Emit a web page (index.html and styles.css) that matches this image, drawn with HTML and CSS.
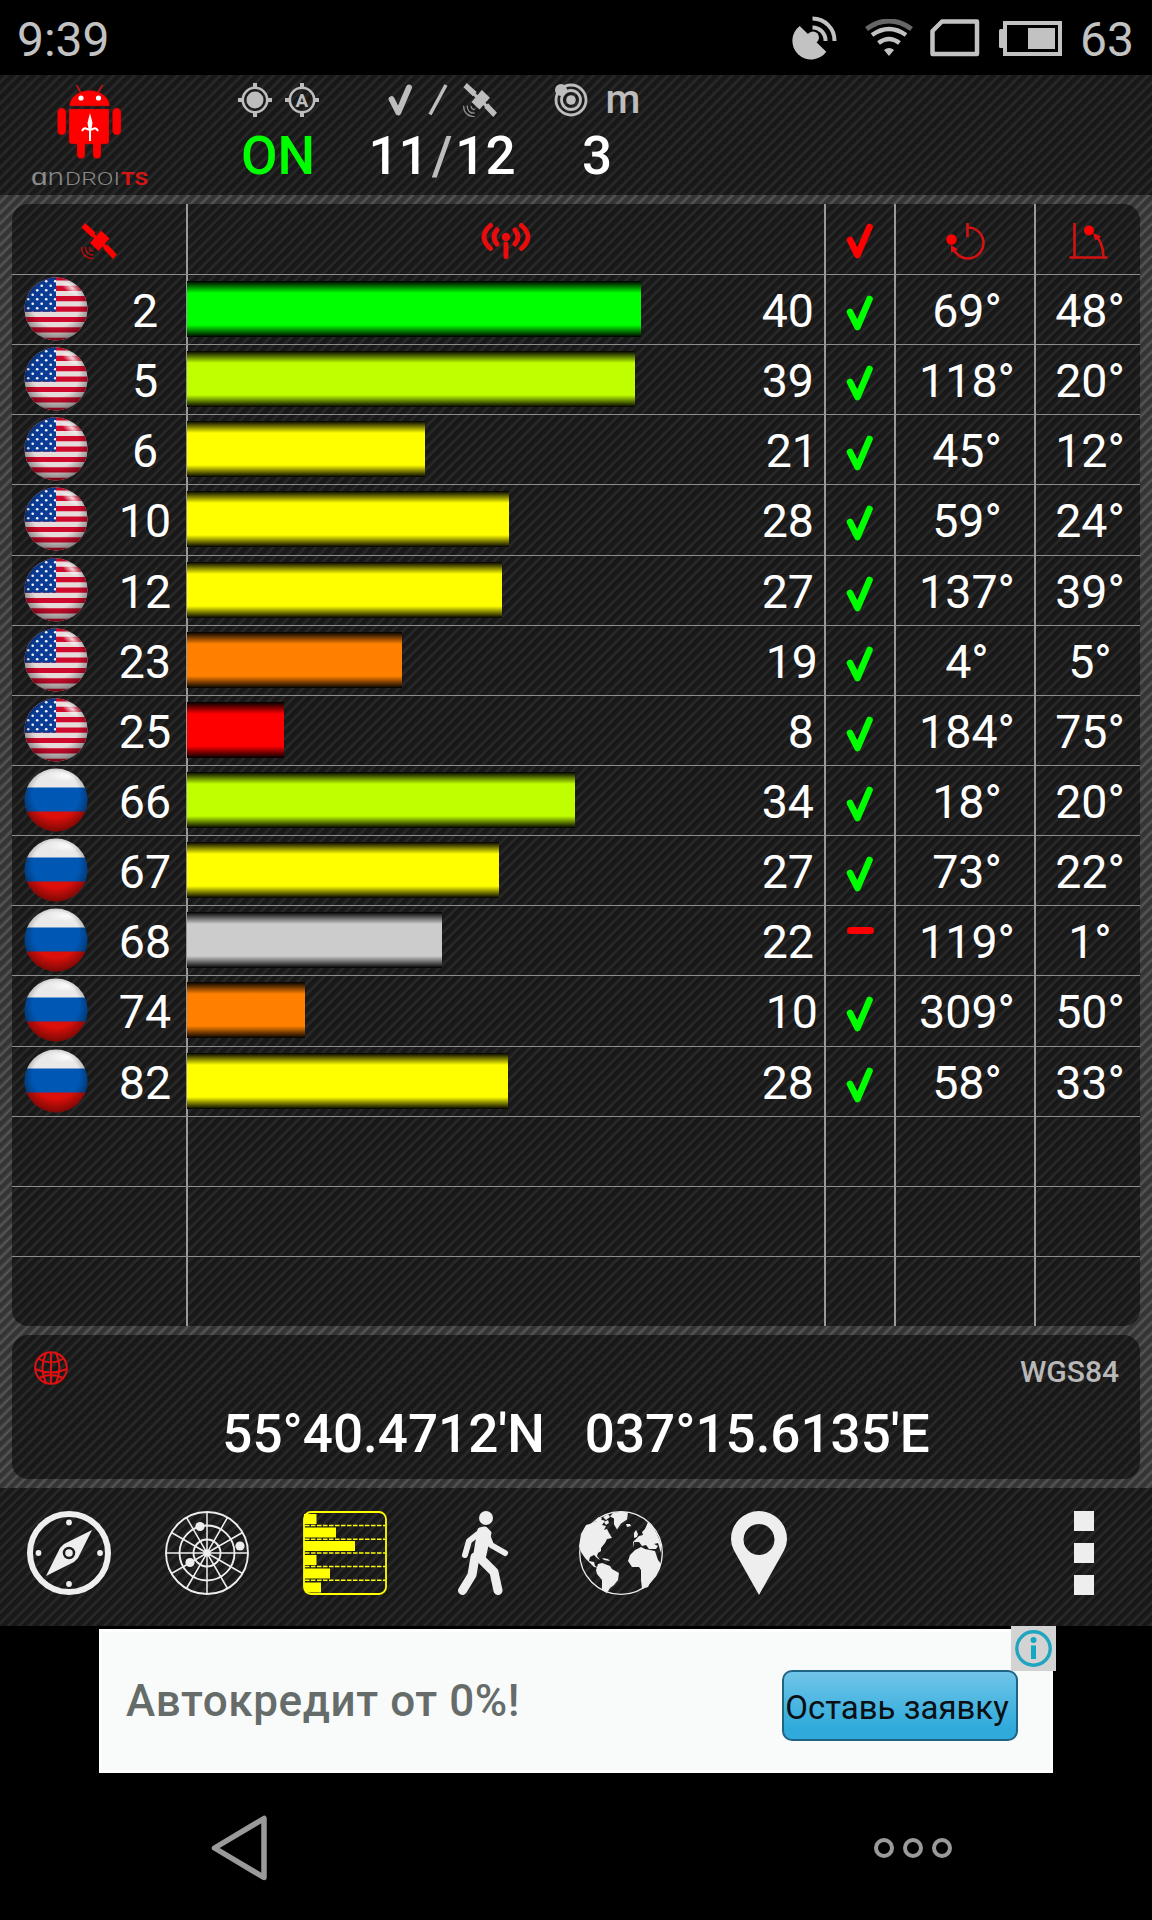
FILE: index.html
```html
<!DOCTYPE html>
<html lang="ru">
  <head>
    <meta charset="utf-8" />
    <title>AndroiTS GPS Test</title>
    <link rel="stylesheet" href="styles.css">
  </head>

  <body>
    <svg class="sprite" width="0" height="0">
      <defs>
        <clipPath id="disc"><circle cx="32" cy="32" r="31.5" /></clipPath>
        <radialGradient id="shade" cx="0.5" cy="0.42" r="0.6">
          <stop offset="0.6" stop-color="#000" stop-opacity="0" />
          <stop offset="1" stop-color="#000" stop-opacity="0.5" />
        </radialGradient>
        <radialGradient id="shine" cx="0.5" cy="0.5" r="0.5">
          <stop offset="0" stop-color="#fff" stop-opacity="0.85" />
          <stop offset="1" stop-color="#fff" stop-opacity="0" />
        </radialGradient>
        <pattern id="stars" width="9" height="9" patternUnits="userSpaceOnUse" x="2" y="2">
          <circle cx="2.2" cy="2.2" r="1.3" fill="#fff" />
          <circle cx="6.7" cy="6.7" r="1.3" fill="#fff" />
        </pattern>
      </defs>
      <symbol id="us" viewBox="0 0 64 64">
        <g clip-path="url(#disc)">
          <rect width="64" height="64" fill="#e6dcdc" />
          <path
            d="M0 1h64M0 11.3h64M0 21.7h64M0 32.1h64M0 42.5h64M0 52.9h64M0 63.3h64"
            stroke="#cf0a2c"
            stroke-width="5.2"
          />
          <rect width="32" height="34.7" fill="#0a3c96" />
          <rect width="32" height="34.7" fill="url(#stars)" />
          <ellipse cx="48" cy="11" rx="12" ry="6" transform="rotate(32 48 11)" fill="url(#shine)" />
          <rect width="64" height="64" fill="url(#shade)" />
        </g>
      </symbol>
      <symbol id="ru" viewBox="0 0 64 64">
        <g clip-path="url(#disc)">
          <rect width="64" height="20" fill="#e9e9e9" />
          <rect y="19.5" width="64" height="25" fill="#0057b4" />
          <rect y="43.5" width="64" height="21" fill="#dc0f0a" />
          <ellipse cx="42" cy="8" rx="18" ry="6" fill="url(#shine)" />
          <rect width="64" height="64" fill="url(#shade)" />
        </g>
      </symbol>
      <symbol id="check" viewBox="0 0 28 38">
        <path
          d="M4 18 11.5 33 23.5 5"
          fill="none"
          stroke="currentColor"
          stroke-width="6.6"
          stroke-linecap="round"
          stroke-linejoin="round"
        />
      </symbol>
      <symbol id="satellite" viewBox="0 0 36 36">
        <path d="M4 0 .5 4.500 10.500 14 14.500 9.500zM26.500 21.500 36 31.500 32 36 22.500 26z" fill="currentColor" />
        <path d="M20 7.500 28.500 15.500 17.500 28 9 20z" fill="currentColor" />
        <path d="M11 11 25 24.500" stroke="currentColor" stroke-width="3.500" />
        <path
          d="M8.500 24q0 4 4 4M4.500 24q0 8 8 8M.7 24q-.5 10.500 12 12"
          fill="none"
          stroke="currentColor"
          stroke-width="1.300"
          opacity="0.75"
        />
      </symbol>
    </svg>

    <div class="status-bar">
      <div class="clock">9:39</div>
      <svg class="ic-dish" width="46" height="46" viewBox="0 0 46 46">
        <path d="M34.300 36.700A18.700 18.700 0 1 1 7.700 11z" fill="#c2c2c2" />
        <circle cx="21" cy="22.500" r="6" fill="#c2c2c2" />
        <path d="M20.500 12.500a13 13 0 0 1 13 13.500M20.500 3.500a22 22 0 0 1 22 22.500" fill="none" stroke="#c2c2c2" stroke-width="4" />
      </svg>
      <svg class="ic-wifi" width="48" height="38" viewBox="0 0 48 38">
        <path d="M1.500 10Q24-6 46.500 10" fill="none" stroke="#666" stroke-width="5" />
        <path d="M7 16Q24 4 41 16M13.500 24Q24 16 34.500 24" fill="none" stroke="#c2c2c2" stroke-width="4.500" />
        <path d="M19 31q5-4 10 0l-5 6z" fill="#c2c2c2" />
      </svg>
      <svg class="ic-sim" width="50" height="38" viewBox="0 0 50 38">
        <path d="M12 2.500H47V35H2.500V12z" fill="none" stroke="#c2c2c2" stroke-width="4.500" stroke-linejoin="round" />
      </svg>
      <svg class="ic-battery" width="64" height="36" viewBox="0 0 64 36">
        <rect x="0" y="8" width="5" height="19" rx="1.500" fill="#c2c2c2" />
        <rect x="6" y="2" width="55" height="31" fill="none" stroke="#c2c2c2" stroke-width="4" />
        <rect x="29" y="7" width="27" height="21" fill="#c2c2c2" />
      </svg>
      <div class="battery-level">63</div>
    </div>

    <div class="header">
      <svg class="logo" width="180" height="120" viewBox="0 0 180 120">
        <g fill="#f00" stroke="#8a1010" stroke-width="0.500">
          <path d="M69.500 31a20 15.500 0 0 1 40 0z" />
          <path d="M69 34h40v32q0 3-3 3h-5v10.500q0 4-4 4t-4-4V69h-8v10.500q0 4-4 4t-4-4V69h-5q-3 0-3-3z" />
          <rect x="57.500" y="33" width="8.500" height="27" rx="4.200" />
          <rect x="112.500" y="33" width="8.500" height="27" rx="4.200" />
        </g>
        <path d="M76.500 10l4 7M102.500 10l-4 7" stroke="#e01010" stroke-width="1.500" />
        <circle cx="81" cy="23" r="2.600" fill="#fff" />
        <circle cx="98.500" cy="23" r="2.600" fill="#fff" />
        <path d="M90 38l2.500 10-1 6h-3l-1-6z" fill="#fff" />
        <path d="M90 50v16M82 56q2-4 5-2l3 1 3-1q3-2 5 2" fill="none" stroke="#fff" stroke-width="2" />
        <text class="logo-text" x="31" y="109.500" font-size="24" textLength="33" lengthAdjust="spacingAndGlyphs">ɑn</text>
        <text class="logo-text" x="65" y="109.500" font-size="18" textLength="55" lengthAdjust="spacingAndGlyphs">DROI</text>
        <text class="logo-text logo-red" x="121" y="109.500" font-size="18" textLength="27" lengthAdjust="spacingAndGlyphs">TS</text>
      </svg>
      <div class="stat stat-gps">
        <div class="stat-icons">
          <svg width="34" height="34" viewBox="0 0 34 34">
            <path d="M17 0v5M17 29v5M0 17h5M29 17h5" stroke="#bdbdbd" stroke-width="4" />
            <circle cx="17" cy="17" r="12.200" fill="none" stroke="#bdbdbd" stroke-width="2.600" />
            <circle cx="17" cy="17" r="8.500" fill="#bdbdbd" />
          </svg>
          <svg width="34" height="34" viewBox="0 0 34 34">
            <path d="M17 0v5M17 29v5M0 17h5M29 17h5" stroke="#bdbdbd" stroke-width="4" />
            <circle cx="17" cy="17" r="12.200" fill="none" stroke="#bdbdbd" stroke-width="2.600" />
            <text class="auto" x="17" y="24" text-anchor="middle">A</text>
          </svg>
        </div>
        <div class="value on">ON</div>
      </div>
      <div class="stat stat-count">
        <div class="stat-icons">
          <svg width="25" height="34"><use href="#check" /></svg>
          <svg width="20" height="34" viewBox="0 0 20 34">
            <path d="M2 31.500 18 2" stroke="#bdbdbd" stroke-width="3.500" />
          </svg>
          <svg width="34" height="34"><use href="#satellite" /></svg>
        </div>
        <div class="value">11<span class="slash">/</span>12</div>
      </div>
      <div class="stat stat-accuracy">
        <div class="stat-icons">
          <svg width="34" height="34" viewBox="0 0 34 34">
            <circle cx="17" cy="17" r="15" fill="none" stroke="#bdbdbd" stroke-width="2.800" />
            <circle cx="17" cy="17" r="9.500" fill="none" stroke="#bdbdbd" stroke-width="2.800" />
            <circle cx="17" cy="17" r="4.800" fill="#bdbdbd" />
            <circle cx="7" cy="7" r="6" fill="#bdbdbd" />
          </svg>
          <span class="unit">m</span>
        </div>
        <div class="value">3</div>
      </div>
    </div>

    <div class="main">
      <div class="panel table">
        <div class="row head">
          <div class="cell sat"><svg width="36" height="36"><use href="#satellite" /></svg></div>
          <div class="cell signal">
            <svg width="50" height="38" viewBox="0 0 50 38">
              <g fill="none" stroke="#e80c0c" stroke-width="5" stroke-linecap="round">
                <path d="M9.500 3.500Q-3.500 15 9.500 26.500M40.500 3.500Q53.500 15 40.500 26.500M16 8Q10 15 16 22M34 8Q40 15 34 22" />
                <path d="M25 22v12.500" />
              </g>
              <circle cx="25" cy="15" r="4.300" fill="#e80c0c" />
            </svg>
          </div>
          <div class="cell used"><svg width="28" height="38"><use href="#check" /></svg></div>
          <div class="cell azimuth">
            <svg width="40" height="38" viewBox="0 0 40 38">
              <path d="M22.500 1v14M22.500 5.500a15.500 15.500 0 1 1-14 21" fill="none" stroke="#d41212" stroke-width="2.600" />
              <circle cx="6.500" cy="17.500" r="5.200" fill="#f00" />
              <path d="M6 23l7 4.500-7 3z" fill="#e80c0c" />
            </svg>
          </div>
          <div class="cell elevation">
            <svg width="40" height="38" viewBox="0 0 40 38">
              <path d="M6.500 1v35M1.500 35.500h38M35.500 35Q35 20 27 13" fill="none" stroke="#d41212" stroke-width="2.600" />
              <circle cx="21" cy="8.500" r="5" fill="#f00" />
              <path d="M25 11l8 3.500-5.500 4z" fill="#e80c0c" />
            </svg>
          </div>
        </div>
        <div class="row">
          <div class="cell sat"><svg class="flag"><use href="#us" /></svg><span class="prn">2</span></div>
          <div class="cell signal"><div class="bar green" style="width: 454px"></div><span class="snr">40</span></div>
          <div class="cell used"><svg class="tick"><use href="#check" /></svg></div>
          <div class="cell azimuth">69°</div>
          <div class="cell elevation">48°</div>
        </div>
        <div class="row">
          <div class="cell sat"><svg class="flag"><use href="#us" /></svg><span class="prn">5</span></div>
          <div class="cell signal"><div class="bar lime" style="width: 448px"></div><span class="snr">39</span></div>
          <div class="cell used"><svg class="tick"><use href="#check" /></svg></div>
          <div class="cell azimuth">118°</div>
          <div class="cell elevation">20°</div>
        </div>
        <div class="row">
          <div class="cell sat"><svg class="flag"><use href="#us" /></svg><span class="prn">6</span></div>
          <div class="cell signal"><div class="bar yellow" style="width: 238px"></div><span class="snr hang">21</span></div>
          <div class="cell used"><svg class="tick"><use href="#check" /></svg></div>
          <div class="cell azimuth">45°</div>
          <div class="cell elevation">12°</div>
        </div>
        <div class="row">
          <div class="cell sat"><svg class="flag"><use href="#us" /></svg><span class="prn">10</span></div>
          <div class="cell signal"><div class="bar yellow" style="width: 322px"></div><span class="snr">28</span></div>
          <div class="cell used"><svg class="tick"><use href="#check" /></svg></div>
          <div class="cell azimuth">59°</div>
          <div class="cell elevation">24°</div>
        </div>
        <div class="row">
          <div class="cell sat"><svg class="flag"><use href="#us" /></svg><span class="prn">12</span></div>
          <div class="cell signal"><div class="bar yellow" style="width: 315px"></div><span class="snr">27</span></div>
          <div class="cell used"><svg class="tick"><use href="#check" /></svg></div>
          <div class="cell azimuth">137°</div>
          <div class="cell elevation">39°</div>
        </div>
        <div class="row">
          <div class="cell sat"><svg class="flag"><use href="#us" /></svg><span class="prn">23</span></div>
          <div class="cell signal"><div class="bar orange" style="width: 215px"></div><span class="snr hang">19</span></div>
          <div class="cell used"><svg class="tick"><use href="#check" /></svg></div>
          <div class="cell azimuth">4°</div>
          <div class="cell elevation">5°</div>
        </div>
        <div class="row">
          <div class="cell sat"><svg class="flag"><use href="#us" /></svg><span class="prn">25</span></div>
          <div class="cell signal"><div class="bar red" style="width: 97px"></div><span class="snr">8</span></div>
          <div class="cell used"><svg class="tick"><use href="#check" /></svg></div>
          <div class="cell azimuth">184°</div>
          <div class="cell elevation">75°</div>
        </div>
        <div class="row">
          <div class="cell sat"><svg class="flag"><use href="#ru" /></svg><span class="prn">66</span></div>
          <div class="cell signal"><div class="bar lime" style="width: 388px"></div><span class="snr">34</span></div>
          <div class="cell used"><svg class="tick"><use href="#check" /></svg></div>
          <div class="cell azimuth">18°</div>
          <div class="cell elevation">20°</div>
        </div>
        <div class="row">
          <div class="cell sat"><svg class="flag"><use href="#ru" /></svg><span class="prn">67</span></div>
          <div class="cell signal"><div class="bar yellow" style="width: 312px"></div><span class="snr">27</span></div>
          <div class="cell used"><svg class="tick"><use href="#check" /></svg></div>
          <div class="cell azimuth">73°</div>
          <div class="cell elevation">22°</div>
        </div>
        <div class="row">
          <div class="cell sat"><svg class="flag"><use href="#ru" /></svg><span class="prn">68</span></div>
          <div class="cell signal"><div class="bar gray" style="width: 255px"></div><span class="snr">22</span></div>
          <div class="cell used"><div class="unused"></div></div>
          <div class="cell azimuth">119°</div>
          <div class="cell elevation">1°</div>
        </div>
        <div class="row">
          <div class="cell sat"><svg class="flag"><use href="#ru" /></svg><span class="prn">74</span></div>
          <div class="cell signal"><div class="bar orange" style="width: 118px"></div><span class="snr hang">10</span></div>
          <div class="cell used"><svg class="tick"><use href="#check" /></svg></div>
          <div class="cell azimuth">309°</div>
          <div class="cell elevation">50°</div>
        </div>
        <div class="row">
          <div class="cell sat"><svg class="flag"><use href="#ru" /></svg><span class="prn">82</span></div>
          <div class="cell signal"><div class="bar yellow" style="width: 321px"></div><span class="snr">28</span></div>
          <div class="cell used"><svg class="tick"><use href="#check" /></svg></div>
          <div class="cell azimuth">58°</div>
          <div class="cell elevation">33°</div>
        </div>
        <div class="row">
          <div class="cell sat"></div>
          <div class="cell signal"></div>
          <div class="cell used"></div>
          <div class="cell azimuth"></div>
          <div class="cell elevation"></div>
        </div>
        <div class="row">
          <div class="cell sat"></div>
          <div class="cell signal"></div>
          <div class="cell used"></div>
          <div class="cell azimuth"></div>
          <div class="cell elevation"></div>
        </div>
        <div class="row">
          <div class="cell sat"></div>
          <div class="cell signal"></div>
          <div class="cell used"></div>
          <div class="cell azimuth"></div>
          <div class="cell elevation"></div>
        </div>
      </div>

      <div class="panel position">
        <div class="position-top">
          <svg width="34" height="34" viewBox="0 0 34 34">
            <g fill="none" stroke="#e01010" stroke-width="2">
              <circle cx="17" cy="17" r="15.800" />
              <path d="M17 1v32M12 2Q5 17 12 32M22 2Q29 17 22 32M5 8Q17 15 29 8M1 18Q17 25 33 18M5 27Q17 21 29 27" />
            </g>
          </svg>
          <span class="datum">WGS84</span>
        </div>
        <div class="coords"><span>55°40.4712'N</span><span>037°15.6135'E</span></div>
      </div>
    </div>

    <div class="toolbar">
      <svg width="84" height="84" viewBox="0 0 84 84">
        <circle cx="42" cy="42" r="39" fill="none" stroke="#eee" stroke-width="6" />
        <g fill="#eee">
          <circle cx="42" cy="11.500" r="2.900" />
          <circle cx="42" cy="73" r="2.900" />
          <circle cx="11.500" cy="42" r="2.900" />
          <circle cx="73" cy="42" r="2.900" />
          <path d="M65 19 51 47 47 51 19 65 33 37 37 33z" />
        </g>
        <circle cx="42" cy="42" r="5" fill="#eee" stroke="#1b1b1b" stroke-width="2.500" />
      </svg>
      <svg width="84" height="84" viewBox="0 0 84 84">
        <g fill="none" stroke="#eee" stroke-width="1.900">
          <circle cx="42" cy="42" r="41" />
          <circle cx="42" cy="42" r="27.500" />
          <circle cx="42" cy="42" r="13.500" />
          <path d="M42 1v82M1 42h82M21.500 6.500l41 71M62.500 6.500l-41 71M6.500 21.500l71 41M6.500 62.500l71-41" stroke-width="1.500" />
        </g>
        <g fill="#eee">
          <circle cx="35" cy="15.500" r="4.600" />
          <circle cx="75" cy="35" r="4.600" />
          <circle cx="25" cy="51.500" r="4.600" />
          <circle cx="42" cy="42" r="3.500" />
        </g>
      </svg>
      <svg width="84" height="84" viewBox="0 0 84 84">
        <rect x="1" y="1" width="82" height="82" rx="7" fill="none" stroke="#ff0" stroke-width="1.800" />
        <path d="M2 14.500h80M2 28.300h80M2 42h80M2 55.500h80M2 69.300h80" stroke="#ff0" stroke-width="1.500" stroke-dasharray="4.500 1.500" />
        <path d="M1 3h12.500v10H1zM1 16.500h32v10H1zM1 30h51v10H1zM1 44h12.500v10H1zM1 57.500h26v10H1zM1 71.500h17v10H2z" fill="#ff0" />
      </svg>
      <svg width="84" height="84" viewBox="0 0 84 84">
        <g fill="none" stroke="#eee" stroke-linecap="round" stroke-linejoin="round">
          <circle cx="45" cy="7" r="7" fill="#eee" stroke="none" />
          <path d="M42 19 28 30 24 44" stroke-width="6" />
          <path d="M45 22 50 34 64 42" stroke-width="6" />
          <path d="M34 46 31 64 21.500 79.500" stroke-width="9" />
          <path d="M38 46 53 61 57 79.500" stroke-width="9" />
          <path d="M39 19 34 48 42 48 46 30 48 22 44 18z" fill="#eee" stroke-width="5" />
        </g>
      </svg>
      <svg width="84" height="84" viewBox="0 0 84 84">
        <circle cx="42" cy="42" r="41.300" fill="none" stroke="#eee" stroke-width="1.300" />
        <g fill="#eee">
          <path d="M14 12l7-4 5 2-3 4 4 1-2 4 3-1 2 4 3 5-5 1-2 4-4 5 0 3-3 2-1 3 3 4-3-2-3-3-4 2-1 4 5 1 1 4 4 2-5-1-4-4-5-5-4-6-2-6 2-12 5-9z" />
          <path d="M16 10l4-4 3 1-2 3zM24 6l5-3 2 3-4 3zM25 11l4-2 1 3-3 2z" />
          <path d="M34 2l8-1.500 7 1-1 7-6 4-4 6-3-5 0-6-4-2zM47 13l4 0 1 2-4 1z" />
          <path d="M19 53l4-1 8 3 2 3 7 4-1 7-4 5-4 3-3 5-5-3 0-10-5-6-1-4z" />
          <path d="M23 47l6 1 2 2-6-1z" />
          <path d="M56 39l6-3 4 2 10 2 3 9 3 4-5 12-5 5-3 6-6 2-1-9 0-10-2-3-7 0-4-6 2-6z" />
          <path d="M55 37l0-6 5 0 3 4 4-1 3 4 7 0 2-3-4-2 4-1 3 10 0-9-4-10-4-7-5-5-3 7-3 3 1 3-4 1-4 4-2 2zM55 22l2-3 2 4-1 3-3 1z" />
        </g>
      </svg>
      <svg width="84" height="84" viewBox="0 0 84 84">
        <path
          d="M42 0a28 28 0 0 1 28 28q0 6-3 11.500L42 84 17 39.500Q14 34 14 28A28 28 0 0 1 42 0zM42 13a15.500 15.500 0 1 0 .01 0z"
          fill="#eee"
          fill-rule="evenodd"
        />
      </svg>
      <div class="overflow"><i></i><i></i><i></i></div>
    </div>

    <div class="ad">
      <div class="banner">
        <span class="banner-text">Автокредит от 0%!</span>
        <div class="banner-button">Оставь заявку</div>
        <svg class="ad-info" width="45" height="45" viewBox="0 0 45 45">
          <rect width="45" height="45" fill="#d3d3d3" />
          <circle cx="22.500" cy="22.500" r="16.700" fill="none" stroke="#1fa5bf" stroke-width="3.400" />
          <circle cx="22.500" cy="14" r="3" fill="#12a7c4" />
          <rect x="20" y="19.500" width="5" height="13.500" fill="#12a7c4" />
        </svg>
      </div>
    </div>

    <div class="nav">
      <svg class="nav-back" width="60" height="70" viewBox="0 0 60 70">
        <path d="M4.500 35 54 5.500V64.500z" fill="none" stroke="#9a9a9a" stroke-width="5.500" stroke-linejoin="round" />
      </svg>
      <div class="nav-more"><i></i><i></i><i></i></div>
    </div>
  </body>
</html>
```

FILE: styles.css
```css
html {
  background: #000;
}

body {
  font-family: Roboto, sans-serif;
  width: 1152px;
  height: 1920px;
  margin: 0;
  display: flex;
  flex-direction: column;
  overflow: hidden;
  color: #fff;
  background: #000;
}

*,
*:before,
*:after {
  box-sizing: border-box;
}

svg {
  display: block;
  flex: none;
}

.sprite {
  position: absolute;
}

/* status bar */

.status-bar {
  height: 75px;
  flex: none;
  display: flex;
  align-items: center;
  padding: 0 18px 0 17px;
  font-size: 48px;
  line-height: 75px;
  color: #c2c2c2;
}

.clock {
  flex: 1;
  padding-top: 3px;
}

.ic-wifi {
  margin: 0 17px 0 27px;
}

.ic-battery {
  margin: 2px 17px 0 19px;
}

.battery-level {
  padding-top: 3px;
}

/* carbon texture */

.header,
.toolbar,
.panel {
  background-image: repeating-linear-gradient(
    135deg,
    #171717 0,
    #191919 3px,
    #2b2b2b 5.4px,
    #171717 7.542px
  );
}

.main {
  background-image: repeating-linear-gradient(
    135deg,
    #333 0,
    #353535 2.8px,
    #585858 5.4px,
    #333 7.542px
  );
}

.header {
  height: 120px;
  flex: none;
  display: flex;
}

.logo-text {
  font-family: Roboto, sans-serif;
  font-weight: 300;
  fill: #8a8a8a;
}

.logo-red {
  font-weight: 700;
  fill: #d81414;
}

.stat {
  display: flex;
  flex-direction: column;
  align-items: center;
  padding-top: 8px;
}

.stat-gps {
  width: 196px;
}

.stat-count {
  width: 132px;
}

.stat-accuracy {
  width: 178px;
}

.stat-icons {
  height: 34px;
  display: flex;
  align-items: center;
  gap: 13px;
  color: #bdbdbd;
}

.stat-count .stat-icons {
  gap: 15px;
}

.stat-accuracy .stat-icons {
  gap: 18px;
}

.auto {
  font-size: 19px;
  font-weight: 700;
  fill: #bdbdbd;
}

.unit {
  font-size: 40px;
  font-weight: 500;
  line-height: 34px;
  height: 34px;
}

.value {
  font-size: 53px;
  font-weight: 500;
  line-height: 64px;
  margin-top: 7px;
}

.on {
  color: #0f0;
}

.slash {
  color: #bdbdbd;
  margin: 0 3px;
}

/* satellites */

.main {
  height: 1293px;
  flex: none;
  display: flex;
  flex-direction: column;
  gap: 9px;
  padding: 9px 12px;
}

.panel {
  border-radius: 16px;
  overflow: hidden;
}

.table {
  height: 1122px;
  display: flex;
  flex-direction: column;
}

.row {
  flex: 1 1 0;
  min-height: 0;
  display: flex;
  border-bottom: 1px solid #8c8c8c;
}

.row:last-child {
  border-bottom: 0;
}

.head {
  flex: none;
  height: 71px;
}

.cell {
  display: flex;
  justify-content: center;
  border-right: 2px solid #999;
  font-size: 46.5px;
  line-height: 72px;
}

.cell:last-child {
  border-right: 0;
}

.head .cell {
  align-items: center;
  padding-top: 4px;
  color: #f00;
}

.sat {
  width: 176px;
}

.signal {
  width: 638px;
}

.used {
  width: 70px;
}

.azimuth {
  width: 140px;
}

.elevation {
  width: 104px;
}

.row:not(.head) .azimuth,
.row:not(.head) .elevation {
  padding-left: 4px;
}

.flag {
  width: 64px;
  height: 64px;
  margin: 2px 16.5px 0 11.5px;
}

.prn {
  width: 82px;
  text-align: center;
}

.row:not(.head) .signal {
  justify-content: space-between;
  padding-right: 10px;
}

.hang {
  margin-right: -4px;
}

.bar {
  height: 56px;
  margin: 6px 0 0 -1px;
}

.green {
  background: linear-gradient(#000, #0f0 12px, #0f0 44px, #000);
}

.lime {
  background: linear-gradient(#000, #bfff00 12px, #bfff00 44px, #000);
}

.yellow {
  background: linear-gradient(#000, #ff0 12px, #ff0 44px, #000);
}

.orange {
  background: linear-gradient(#000, #ff8000 12px, #ff8000 44px, #000);
}

.red {
  background: linear-gradient(#000, #f00 12px, #f00 44px, #000);
}

.gray {
  background: linear-gradient(#000, #ccc 12px, #ccc 44px, #000);
}

.tick {
  width: 28px;
  height: 38px;
  margin-top: 19px;
  color: #0f0;
}

.unused {
  width: 27px;
  height: 7px;
  margin-top: 21px;
  border-radius: 4px;
  background: #f00;
}

/* position */

.position {
  height: 144px;
}

.position-top {
  display: flex;
  justify-content: space-between;
  padding: 16px 21px 0 22px;
}

.datum {
  font-size: 30px;
  font-weight: 500;
  line-height: 42px;
  color: #b8b8b8;
}

.coords {
  display: flex;
  justify-content: center;
  gap: 40px;
  font-size: 53px;
  font-weight: 500;
  line-height: 64px;
  margin-top: 9px;
}

/* toolbar */

.toolbar {
  height: 138px;
  flex: none;
  display: flex;
  gap: 54px;
  padding: 23px 58px 0 27px;
}

.overflow {
  width: 20px;
  height: 84px;
  margin-left: auto;
  display: flex;
  flex-direction: column;
  justify-content: space-between;
}

.overflow i {
  height: 20px;
  background: #eee;
}

/* ad */

.ad {
  height: 147px;
  flex: none;
  padding: 3px 99px 0;
}

.banner {
  position: relative;
  height: 144px;
  display: flex;
  align-items: center;
  justify-content: space-between;
  padding: 0 32px 0 24px;
  border: 3px solid #fff;
  background: #f9fbfa;
}

.banner-text {
  font-size: 44px;
  font-weight: 500;
  letter-spacing: 0.6px;
  color: #666c6a;
}

.banner-button {
  width: 236px;
  height: 71px;
  margin-top: 9px;
  padding-right: 6px;
  border: 2px solid #1f6485;
  border-radius: 10px;
  background: linear-gradient(#70c5e8, #2faadb 85%);
  color: #0a0f14;
  font-size: 33px;
  line-height: 71px;
  white-space: nowrap;
  text-align: center;
}

.ad-info {
  position: absolute;
  top: -6px;
  right: -6px;
}

/* navigation */

.nav {
  flex: 1;
  display: flex;
  align-items: center;
  justify-content: space-between;
  padding: 2px 200px 0 210px;
}

.nav-more {
  display: flex;
  gap: 9px;
}

.nav-more i {
  width: 20px;
  height: 20px;
  border: 4.5px solid #9a9a9a;
  border-radius: 50%;
}
```
